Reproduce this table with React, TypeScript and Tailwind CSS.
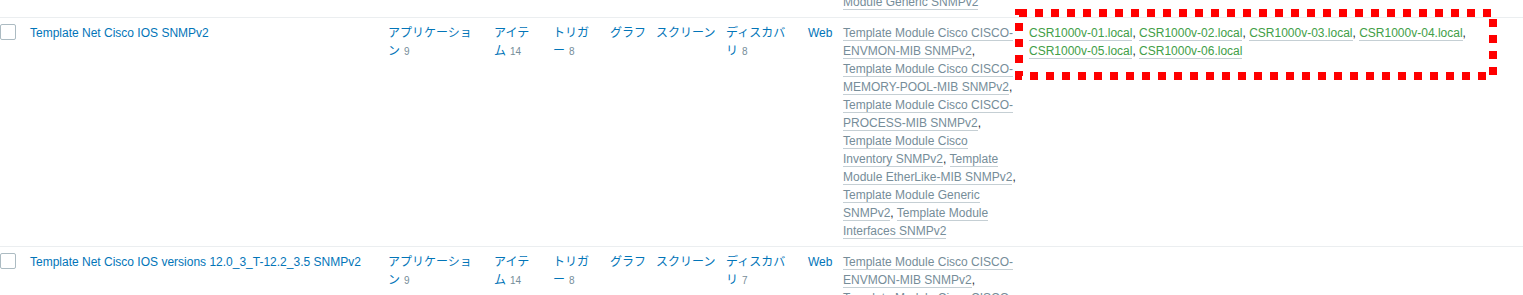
import React from "react";

const TEMPLATES = [
  "Template Module Cisco CISCO-ENVMON-MIB SNMPv2",
  "Template Module Cisco CISCO-MEMORY-POOL-MIB SNMPv2",
  "Template Module Cisco CISCO-PROCESS-MIB SNMPv2",
  "Template Module Cisco Inventory SNMPv2",
  "Template Module EtherLike-MIB SNMPv2",
  "Template Module Generic SNMPv2",
  "Template Module Interfaces SNMPv2",
];

const HOSTS = [
  "CSR1000v-01.local",
  "CSR1000v-02.local",
  "CSR1000v-03.local",
  "CSR1000v-04.local",
  "CSR1000v-05.local",
  "CSR1000v-06.local",
];

interface Row {
  name: string;
  apps: number;
  items: number;
  triggers: number;
  discovery: number;
  templates: string[];
  hosts: string[];
}

const ROWS: Row[] = [
  { name: "Template Net Cisco IOS SNMPv2", apps: 9, items: 14, triggers: 8, discovery: 8, templates: TEMPLATES, hosts: HOSTS },
  {
    name: "Template Net Cisco IOS versions 12.0_3_T-12.2_3.5 SNMPv2",
    apps: 9,
    items: 14,
    triggers: 8,
    discovery: 7,
    templates: TEMPLATES,
    hosts: [],
  },
];

function Count({ label, n }: { label: string; n?: number }) {
  return (
    <span className="[line-break:loose]">
      <span className="text-[#0275b8]">{label}</span>
      {n != null && <span className="ml-[4px] text-[10px] text-[#768d99]">{n}</span>}
    </span>
  );
}

// comma separated alt-links, commas stay in the text colour
function LinkList({ items, color }: { items: string[]; color: string }) {
  return (
    <>
      {items.map((t, i) => (
        <React.Fragment key={t}>
          <span className={`${color} border-b border-[#c5cfd4]`}>{t}</span>
          {i < items.length - 1 && <span className="text-[#1f2c33]">, </span>}
        </React.Fragment>
      ))}
    </>
  );
}

function TemplateRow({ row }: { row: Row }) {
  return (
    <div className="flex items-start border-b border-[#ebeef0] py-[6px]">
      <div className="w-[30px] shrink-0">
        <div className="w-4 h-4 rounded-[2px] border border-[#acbbc2] bg-white" />
      </div>
      <div className="w-[358px] shrink-0 pr-[5px] text-[#0275b8]">{row.name}</div>
      <div className="w-[106px] shrink-0 pr-[16px]">
        <Count label="アプリケーション" n={row.apps} />
      </div>
      <div className="w-[59px] shrink-0 pr-[17px]">
        <Count label="アイテム" n={row.items} />
      </div>
      <div className="w-[57px] shrink-0 pr-[15px]">
        <Count label="トリガー" n={row.triggers} />
      </div>
      <div className="w-[46px] shrink-0">
        <Count label="グラフ" />
      </div>
      <div className="w-[70px] shrink-0">
        <Count label="スクリーン" />
      </div>
      <div className="w-[82px] shrink-0 pr-[16px]">
        <Count label="ディスカバリ" n={row.discovery} />
      </div>
      <div className="w-[35px] shrink-0 text-[#0275b8]">Web</div>
      <div className="w-[186px] shrink-0 pr-[10px]">
        <LinkList items={row.templates} color="text-[#768d99]" />
      </div>
      <div className="flex-1 pr-[5px]">
        <LinkList items={row.hosts} color="text-[#429e47]" />
      </div>
    </div>
  );
}

export default function App() {
  return (
    <div className="relative h-[295px] overflow-hidden bg-white text-[12px] leading-[18px] text-[#1f2c33] [font-family:'Liberation_Sans',Arial,'Noto_Sans_CJK_JP',sans-serif]">
      {/* tail of the previous row, cut off by the top of the page */}
      <div className="-mt-[13px] flex border-b border-[#ebeef0] py-[6px]">
        <div className="w-[843px] shrink-0" />
        <div className="w-[186px] shrink-0">
          <span className="text-[#768d99] border-b border-[#c5cfd4]">Module Generic SNMPv2</span>
        </div>
      </div>
      {ROWS.map((r) => (
        <TemplateRow key={r.name} row={r} />
      ))}

      {/* red dotted highlight drawn over the linked hosts */}
      <svg className="absolute left-[1015px] top-[9px] pointer-events-none" width="482" height="71">
        <rect x="4" y="4" width="474" height="63" fill="none" stroke="#ff0000" strokeWidth="8" strokeDasharray="8 8" />
      </svg>
    </div>
  );
}
